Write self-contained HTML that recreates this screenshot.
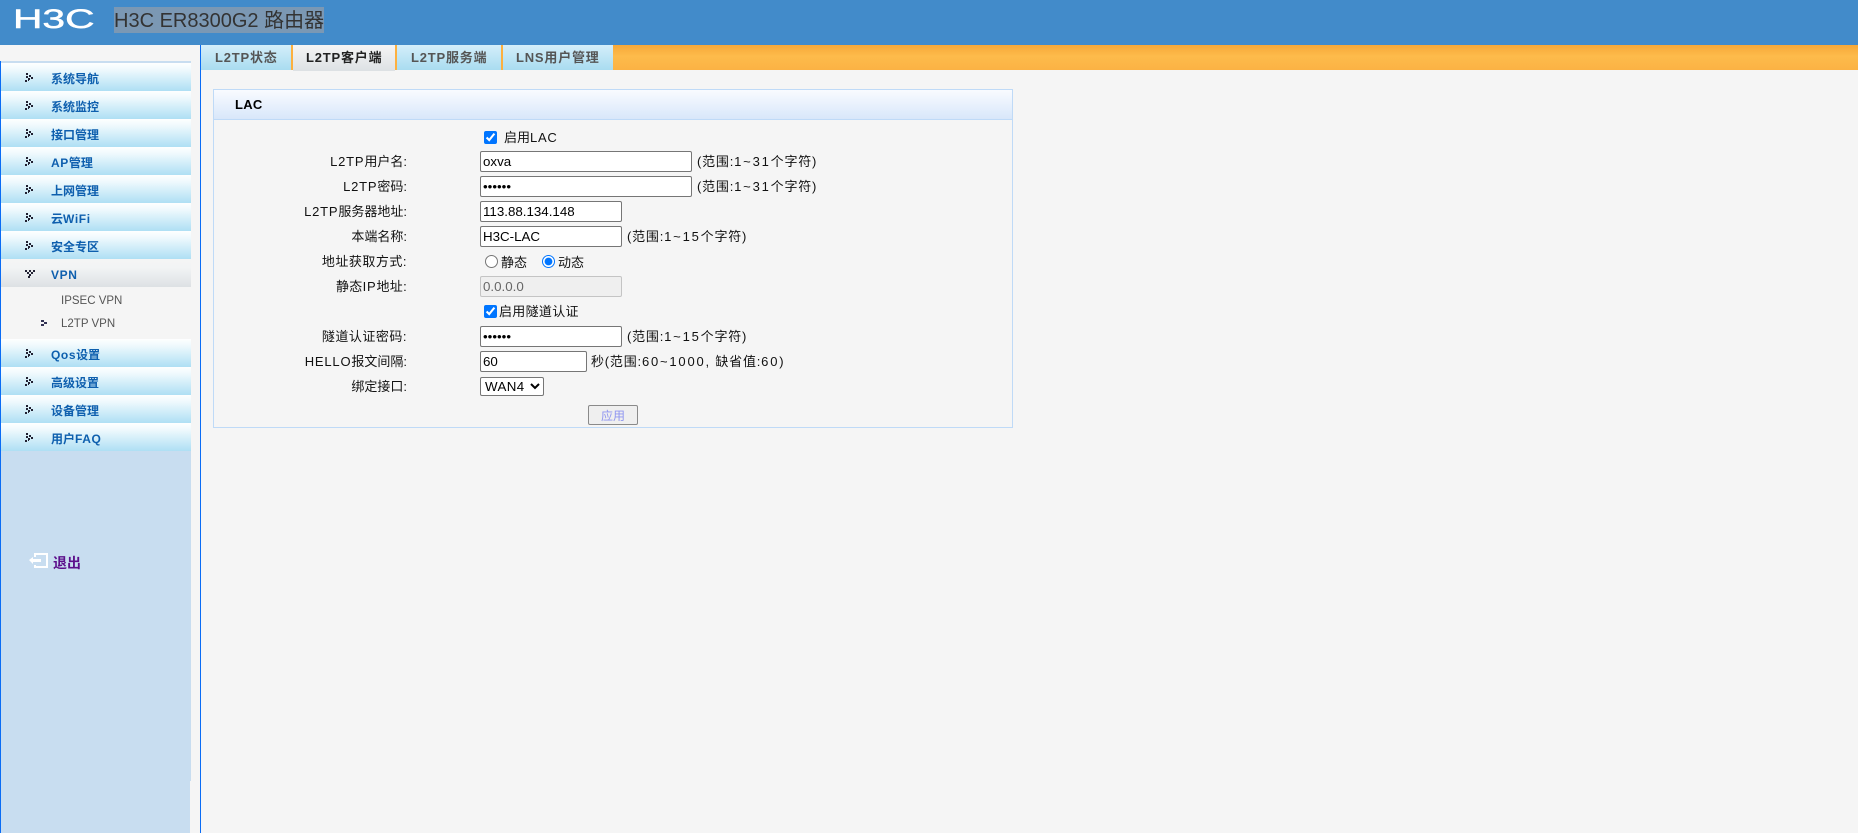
<!DOCTYPE html>
<html lang="zh"><head><meta charset="utf-8"><title>H3C ER8300G2</title>
<style>
html,body{margin:0;padding:0;width:1858px;height:833px;overflow:hidden;background:#f5f5f5}
body{font-family:"Liberation Sans","Noto Sans CJK SC",sans-serif;font-size:13px;color:#111;position:relative}
.a{position:absolute}
#hd{left:0;top:0;width:1858px;height:45px;background:#428bca}
#ttl{left:114px;top:7px;height:26px;line-height:29px;width:210px;background:#7b98b4;color:#333;font-size:20px;white-space:nowrap;overflow:hidden}
.m{position:absolute;left:1px;width:190px;height:28px;background:linear-gradient(#feffff 0%,#eef9fd 25%,#aedff4 100%)}
.m b{position:absolute;left:50px;top:0;line-height:32px;font-size:12px;color:#0e5fae;white-space:nowrap}
.m b span{letter-spacing:.6px}
.m svg{position:absolute;left:24px;top:10px}
.tab{position:absolute;top:45px;height:25px;background:linear-gradient(#d4eefa,#a9dcf0);font-weight:bold;color:#555;letter-spacing:.8px;line-height:25px;white-space:nowrap;box-sizing:border-box;font-size:13px}
.sep{position:absolute;top:45px;width:2px;height:25px;background:#fdb03f}
.lb{position:absolute;right:1451px;white-space:nowrap;line-height:18px;height:18px}
.lb span{letter-spacing:.8px}
.t{position:absolute;white-space:nowrap;line-height:18px;height:18px}
.h{letter-spacing:.8px}
.h i{font-style:normal;letter-spacing:1.8px}
input,select{margin:0;font-family:"Liberation Sans","Noto Sans CJK SC",sans-serif}
input[type=text],input[type=password]{position:absolute;left:480px;height:21px;box-sizing:border-box;padding:1px 2px;font-size:13.33px;border:1px solid #767676;border-radius:2px;background:#fff;color:#000}
</style></head><body>
<div class="a" id="hd"></div>
<svg class="a" style="left:13px;top:5px" width="90" height="28"><text x="0" y="23" transform="scale(1.51 1)" font-family="Liberation Sans" font-size="27" fill="#fff" stroke="#fff" stroke-width=".5">H3C</text></svg>
<div class="a" id="ttl">H3C ER8300G2 路由器</div>

<div class="a" style="left:0;top:61px;width:1px;height:772px;background:#0a6cf5"></div>
<div class="a" style="left:1px;top:61px;width:190px;height:2px;background:#c8ddf0"></div>
<div class="a" style="left:1px;top:451px;width:190px;height:330px;background:#c8ddf0"></div>
<div class="a" style="left:1px;top:781px;width:189px;height:52px;background:#c8ddf0"></div>
<div class="a" style="left:200px;top:45px;width:1px;height:788px;background:#0a6cf5"></div>

<div class="m" style="top:63px"><svg width="9" height="10" fill="#223"><path d="M1 0h2v2H1zM4 2h2v2H4zM1 3h2v2H1zM6 4h2v2H6zM3 5h2v2H3zM0 7h2v2H0zM3 7h1v1H3z"/></svg><b>系统导航</b></div>
<div class="m" style="top:91px"><svg width="9" height="10" fill="#223"><path d="M1 0h2v2H1zM4 2h2v2H4zM1 3h2v2H1zM6 4h2v2H6zM3 5h2v2H3zM0 7h2v2H0zM3 7h1v1H3z"/></svg><b>系统监控</b></div>
<div class="m" style="top:119px"><svg width="9" height="10" fill="#223"><path d="M1 0h2v2H1zM4 2h2v2H4zM1 3h2v2H1zM6 4h2v2H6zM3 5h2v2H3zM0 7h2v2H0zM3 7h1v1H3z"/></svg><b>接口管理</b></div>
<div class="m" style="top:147px"><svg width="9" height="10" fill="#223"><path d="M1 0h2v2H1zM4 2h2v2H4zM1 3h2v2H1zM6 4h2v2H6zM3 5h2v2H3zM0 7h2v2H0zM3 7h1v1H3z"/></svg><b><span>AP</span>管理</b></div>
<div class="m" style="top:175px"><svg width="9" height="10" fill="#223"><path d="M1 0h2v2H1zM4 2h2v2H4zM1 3h2v2H1zM6 4h2v2H6zM3 5h2v2H3zM0 7h2v2H0zM3 7h1v1H3z"/></svg><b>上网管理</b></div>
<div class="m" style="top:203px"><svg width="9" height="10" fill="#223"><path d="M1 0h2v2H1zM4 2h2v2H4zM1 3h2v2H1zM6 4h2v2H6zM3 5h2v2H3zM0 7h2v2H0zM3 7h1v1H3z"/></svg><b>云<span>WiFi</span></b></div>
<div class="m" style="top:231px"><svg width="9" height="10" fill="#223"><path d="M1 0h2v2H1zM4 2h2v2H4zM1 3h2v2H1zM6 4h2v2H6zM3 5h2v2H3zM0 7h2v2H0zM3 7h1v1H3z"/></svg><b>安全专区</b></div>
<div class="m" style="top:259px;background:linear-gradient(#f5f5f5 0%,#f2f4f5 30%,#dde1e4 100%)"><svg width="10" height="9" fill="#223"><path d="M0 1h2v2H0zM4 1h2v2H4zM8 1h2v2H8zM2 3h2v2H2zM6 3h2v2H6zM4 5h2v2H4zM3 7h2v2H3z"/></svg><b><span>VPN</span></b></div>
<div class="t" style="left:61px;top:292px;font-size:11.5px;color:#555">IPSEC VPN</div>
<svg class="a" style="left:41px;top:320px" width="7" height="7" fill="#335"><path d="M0 0h3v2H0zM3 2h3v2H3zM0 4h3v2H0z"/></svg>
<div class="t" style="left:61px;top:315px;font-size:11.5px;color:#555">L2TP VPN</div>
<div class="m" style="top:339px"><svg width="9" height="10" fill="#223"><path d="M1 0h2v2H1zM4 2h2v2H4zM1 3h2v2H1zM6 4h2v2H6zM3 5h2v2H3zM0 7h2v2H0zM3 7h1v1H3z"/></svg><b><span>Qos</span>设置</b></div>
<div class="m" style="top:367px"><svg width="9" height="10" fill="#223"><path d="M1 0h2v2H1zM4 2h2v2H4zM1 3h2v2H1zM6 4h2v2H6zM3 5h2v2H3zM0 7h2v2H0zM3 7h1v1H3z"/></svg><b>高级设置</b></div>
<div class="m" style="top:395px"><svg width="9" height="10" fill="#223"><path d="M1 0h2v2H1zM4 2h2v2H4zM1 3h2v2H1zM6 4h2v2H6zM3 5h2v2H3zM0 7h2v2H0zM3 7h1v1H3z"/></svg><b>设备管理</b></div>
<div class="m" style="top:423px"><svg width="9" height="10" fill="#223"><path d="M1 0h2v2H1zM4 2h2v2H4zM1 3h2v2H1zM6 4h2v2H6zM3 5h2v2H3zM0 7h2v2H0zM3 7h1v1H3z"/></svg><b>用户<span>FAQ</span></b></div>

<svg class="a" style="left:29px;top:553px" width="20" height="16" fill="#fff"><path d="M5 0h14v15H5v-3h2v1h10V2H7v2H5zM0 7l4-3v2h8v3H4v2z"/></svg>
<div class="t" style="left:53px;top:554px;font-size:14px;font-weight:bold;color:#5c0f8b">退出</div>

<div class="a" style="left:613px;top:45px;width:1245px;height:25px;background:linear-gradient(#f7a838 0%,#fdbb4b 45%,#fbb244 100%)"></div>
<div class="tab" style="left:201px;width:90px;padding-left:14px">L2TP状态</div>
<div class="sep" style="left:291px"></div>
<div class="tab" style="left:293px;width:102px;height:26px;padding-left:13px;color:#222;background:linear-gradient(#f5f5f5,#dde1e4)">L2TP客户端</div>
<div class="sep" style="left:395px"></div>
<div class="tab" style="left:397px;width:104px;padding-left:14px">L2TP服务端</div>
<div class="sep" style="left:501px"></div>
<div class="tab" style="left:503px;width:110px;padding-left:13px">LNS用户管理</div>

<div class="a" style="left:213px;top:89px;width:798px;height:337px;border:1px solid #bfdaf7;box-sizing:content-box"></div>
<div class="a" style="left:214px;top:90px;width:798px;height:29px;background:linear-gradient(#f9fbff,#d8e7fa);border-bottom:1px solid #bfdaf7"></div>
<div class="t" style="left:235px;top:96px;font-weight:bold;font-size:13px;color:#000;letter-spacing:.3px">LAC</div>

<input class="a" type="checkbox" checked style="left:484px;top:131px;width:13px;height:13px">
<div class="t" style="left:504px;top:129px">启用<span style="letter-spacing:.7px">LAC</span></div>

<div class="lb" style="top:153px"><span>L2TP</span>用户名:</div>
<input type="text" value="oxva" style="top:151px;width:212px">
<div class="t h" style="left:697px;top:153px">(范围:<i>1~31</i>个字符)</div>

<div class="lb" style="top:178px"><span>L2TP</span>密码:</div>
<input type="password" value="123456" style="top:176px;width:212px">
<div class="t h" style="left:697px;top:178px">(范围:<i>1~31</i>个字符)</div>

<div class="lb" style="top:203px"><span>L2TP</span>服务器地址:</div>
<input type="text" value="113.88.134.148" style="top:201px;width:142px">

<div class="lb" style="top:228px">本端名称:</div>
<input type="text" value="H3C-LAC" style="top:226px;width:142px">
<div class="t h" style="left:627px;top:228px">(范围:<i>1~15</i>个字符)</div>

<div class="lb" style="top:253px;letter-spacing:.5px">地址获取方式:</div>
<input class="a" type="radio" name="r" style="left:485px;top:255px;width:13px;height:13px">
<div class="t" style="left:501px;top:254px">静态</div>
<input class="a" type="radio" name="r" checked style="left:542px;top:255px;width:13px;height:13px">
<div class="t" style="left:558px;top:254px">动态</div>

<div class="lb" style="top:278px;letter-spacing:.3px">静态<span>IP</span>地址:</div>
<input type="text" value="0.0.0.0" disabled style="top:276px;width:142px;background:#efefef;border-color:#c4c4c4;color:#666">

<input class="a" type="checkbox" checked style="left:484px;top:305px;width:13px;height:13px">
<div class="t" style="left:499px;top:303px;letter-spacing:.3px">启用隧道认证</div>

<div class="lb" style="top:328px;letter-spacing:.5px">隧道认证密码:</div>
<input type="password" value="123456" style="top:326px;width:142px">
<div class="t h" style="left:627px;top:328px">(范围:<i>1~15</i>个字符)</div>

<div class="lb" style="top:353px"><span>HELLO</span>报文间隔:</div>
<input type="text" value="60" style="top:351px;width:107px">
<div class="t h" style="left:591px;top:353px">秒(范围:<i>60~1000,</i> 缺省值:<i>60</i>)</div>

<div class="lb" style="top:378px">绑定接口:</div>
<select class="a" style="left:480px;top:377px;width:64px;height:19px;font-size:13.33px;letter-spacing:.4px;border:1px solid #767676;border-radius:2px;background:#fff;color:#000"><option>WAN4</option></select>

<button class="a" style="left:588px;top:405px;width:50px;height:20px;padding:0;font-size:12px;font-family:'Liberation Sans','Noto Sans CJK SC',sans-serif;color:#8f95f0;background:#efefef;border:1px solid #8a8a8a;border-radius:2px">应用</button>
</body></html>
